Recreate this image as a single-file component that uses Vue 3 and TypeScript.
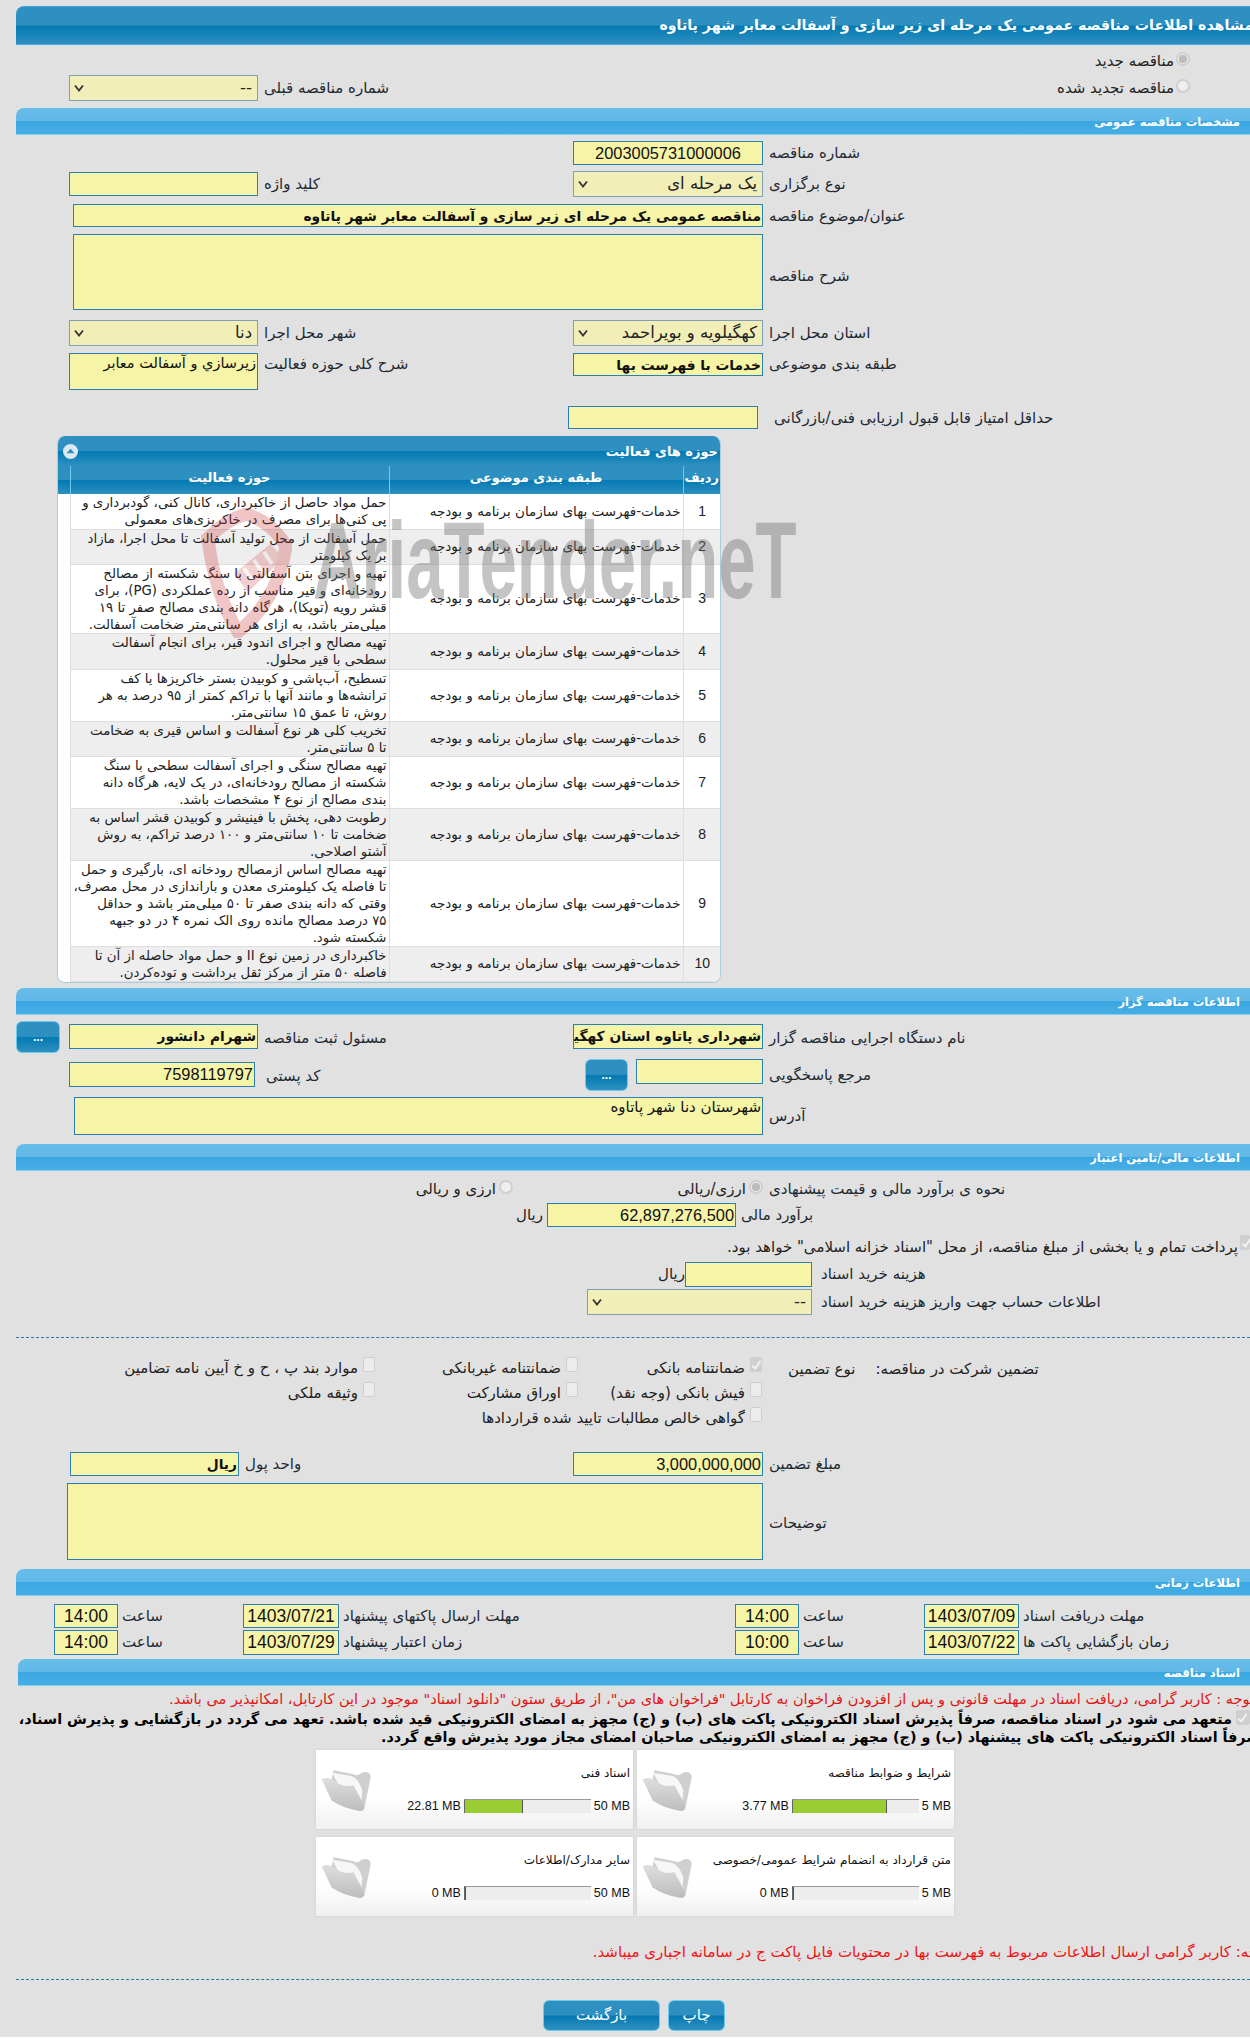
<script setup lang="ts">
const subject = 'خدمات-فهرست بهای سازمان برنامه و بودجه'
const activities: string[] = [
  'حمل مواد حاصل از خاکبرداری، کانال کنی، گودبرداری و\nپی کنی‌ها برای مصرف در خاکریزی‌های معمولی',
  'حمل آسفالت از محل تولید آسفالت تا محل اجرا، مازاد\nبر یک کیلومتر',
  'تهیه و اجرای بتن آسفالتی با سنگ شکسته از مصالح\nرودخانه‌ای و قیر مناسب از رده عملکردی (PG)، برای\nقشر رویه (توپکا)، هرگاه دانه بندی مصالح صفر تا ۱۹\nمیلی‌متر باشد، به ازای هر سانتی‌متر ضخامت آسفالت.',
  'تهیه مصالح و اجرای اندود قیر، برای انجام آسفالت\nسطحی با قیر محلول.',
  'تسطیح، آب‌پاشی و کوبیدن بستر خاکریزها یا کف\nترانشه‌ها و مانند آنها با تراکم کمتر از ۹۵ درصد به هر\nروش، تا عمق ۱۵ سانتی‌متر.',
  'تخریب کلی هر نوع آسفالت و اساس قیری به ضخامت\nتا ۵ سانتی‌متر.',
  'تهیه مصالح سنگی و اجرای آسفالت سطحی با سنگ\nشکسته از مصالح رودخانه‌ای، در یک لایه، هرگاه دانه\nبندی مصالح از نوع ۴ مشخصات باشد.',
  'رطوبت دهی، پخش با فینیشر و کوبیدن قشر اساس به\nضخامت تا ۱۰ سانتی‌متر و ۱۰۰ درصد تراکم، به روش\nآشتو اصلاحی.',
  'تهیه مصالح اساس ازمصالح رودخانه ای، بارگیری و حمل\nتا فاصله یک کیلومتری معدن و باراندازی در محل مصرف،\nوقتی که دانه بندی صفر تا ۵۰ میلی‌متر باشد و حداقل\n۷۵ درصد مصالح مانده روی الک نمره ۴ در دو جبهه\nشکسته شود.',
  'خاکبرداری در زمین نوع II و حمل مواد حاصله از آن تا\nفاصله ۵۰ متر از مرکز ثقل برداشت و توده‌کردن.',
]
const rowHeights = [35, 35, 69, 36, 51, 35, 52, 52, 86, 35]
const files = [
  { title: 'شرایط و ضوابط مناقصه', used: '3.77 MB', limit: '5 MB', pct: 75 },
  { title: 'اسناد فنی', used: '22.81 MB', limit: '50 MB', pct: 46 },
  { title: 'متن قرارداد به انضمام شرایط عمومی/خصوصی', used: '0 MB', limit: '5 MB', pct: 0 },
  { title: 'سایر مدارک/اطلاعات', used: '0 MB', limit: '50 MB', pct: 0 },
]
</script>

<template>
  <div class="page" dir="rtl">
    <div class="bar title"><span>مشاهده اطلاعات مناقصه عمومی یک مرحله ای زیر سازی و آسفالت معابر شهر پاتاوه</span></div>

    <div class="head-opts">
      <div class="opt-a"><i class="radio on"></i><span>مناقصه جدید</span></div>
      <div class="row opt-b">
        <div class="opt-c"><i class="radio"></i><span>مناقصه تجدید شده</span></div>
        <div class="lb prev-lb">شماره مناقصه قبلی</div>
        <div class="sel w189">--<svg class="chev" viewBox="0 0 10 8"><path d="M1 1.5 L5 6.5 L9 1.5" /></svg></div>
      </div>
    </div>

    <div class="bar sec">مشخصات مناقصه عمومی</div>

    <div class="row mt6">
      <div class="lb">شماره مناقصه</div>
      <div class="in num ctr h24">2003005731000006</div>
    </div>
    <div class="row mt6">
      <div class="lb">نوع برگزاری</div>
      <div class="sel w190">یک مرحله ای<svg class="chev" viewBox="0 0 10 8"><path d="M1 1.5 L5 6.5 L9 1.5" /></svg></div>
      <div class="lb">کلید واژه</div>
      <div class="in h24 w189 mt1"></div>
    </div>
    <div class="row mt7">
      <div class="lb">عنوان/موضوع مناقصه</div>
      <div class="in bold h23 wide690">مناقصه عمومی یک مرحله ای زیر سازی و آسفالت معابر شهر پاتاوه</div>
    </div>
    <div class="row mt7">
      <div class="lb low8">شرح مناقصه</div>
      <div class="in h76 wide690"></div>
    </div>
    <div class="row mt10">
      <div class="lb">استان محل اجرا</div>
      <div class="sel w190">کهگیلویه و بویراحمد<svg class="chev" viewBox="0 0 10 8"><path d="M1 1.5 L5 6.5 L9 1.5" /></svg></div>
      <div class="lb">شهر محل اجرا</div>
      <div class="sel w189">دنا<svg class="chev" viewBox="0 0 10 8"><path d="M1 1.5 L5 6.5 L9 1.5" /></svg></div>
    </div>
    <div class="row mt7">
      <div class="lb lb-t">طبقه بندی موضوعی</div>
      <div class="in bold h23">خدمات با فهرست بها</div>
      <div class="lb lb-t">شرح کلی حوزه فعالیت</div>
      <div class="in small h37 w189">زیرسازي و آسفالت معابر</div>
    </div>
    <div class="row mt16">
      <div class="lb score-lb">حداقل امتیاز قابل قبول ارزیابی فنی/بازرگانی</div>
      <div class="in h23 score"></div>
    </div>

    <div class="panel">
      <div class="panel-head">
        <span>حوزه های فعالیت</span>
        <i class="collapse"><svg viewBox="0 0 10 6"><path d="M5 0.5 L9.5 5.5 L0.5 5.5 Z" /></svg></i>
      </div>
      <table class="tbl">
        <thead>
          <tr>
            <th class="c-n">ردیف</th>
            <th class="c-s">طبقه بندی موضوعی</th>
            <th class="c-a">حوزه فعالیت</th>
            <th class="c-e"></th>
          </tr>
        </thead>
        <tbody>
          <tr v-for="(a, i) in activities" :key="i" :style="{ height: rowHeights[i] + 'px' }">
            <td class="c-n num-cell">{{ i + 1 }}</td>
            <td class="c-s">{{ subject }}</td>
            <td class="c-a">{{ a }}</td>
            <td class="c-e"></td>
          </tr>
        </tbody>
      </table>
    </div>

    <div class="bar sec mt5">اطلاعات مناقصه گزار</div>

    <div class="row5 mt9">
      <div class="lb">نام دستگاه اجرایی مناقصه گزار</div>
      <div class="in bold h25">شهرداری پاتاوه استان کهگیلویه و بویراحمد</div>
      <div class="lb">مسئول ثبت مناقصه</div>
      <div class="in bold h25 w189">شهرام دانشور</div>
      <button class="dots side">...</button>
    </div>
    <div class="row5 mt6">
      <div class="lb">مرجع پاسخگویی</div>
      <div class="ref-wrap">
        <div class="in h25 w127"></div>
        <button class="dots">...</button>
      </div>
      <div class="lb mt3 postal-lb">کد پستی</div>
      <div class="in num h25 w186 mt3 lead">7598119797</div>
    </div>
    <div class="row mt6">
      <div class="lb">آدرس</div>
      <div class="in small addr h38 w689">شهرستان دنا شهر پاتاوه</div>
    </div>

    <div class="bar sec mt9">اطلاعات مالی/تامین اعتبار</div>

    <div class="row mt7">
      <div class="lb">نحوه ی برآورد مالی و قیمت پیشنهادی</div>
      <div class="opts">
        <div class="opt w250"><i class="radio on"></i><span>ارزی/ریالی</span></div>
        <div class="opt"><i class="radio"></i><span>ارزی و ریالی</span></div>
      </div>
    </div>
    <div class="flexrow mt3">
      <div class="lb w514">برآورد مالی</div>
      <div class="in num h24 w189">62,897,276,500</div>
      <span class="unit">ریال</span>
    </div>
    <div class="flexrow chk-row">
      <i class="check on"></i>
      <span>پرداخت تمام و یا بخشی از مبلغ مناقصه، از محل "اسناد خزانه اسلامی" خواهد بود.</span>
    </div>
    <div class="flexrow mt3">
      <div class="lb w438">هزینه خرید اسناد</div>
      <div class="in h25 w127"></div>
      <span class="unit tight">ریال</span>
    </div>
    <div class="flexrow mt2">
      <div class="lb w438">اطلاعات حساب جهت واریز هزینه خرید اسناد</div>
      <div class="sel w225">--<svg class="chev" viewBox="0 0 10 8"><path d="M1 1.5 L5 6.5 L9 1.5" /></svg></div>
    </div>

    <hr class="dash gap22" />

    <div class="guar">
      <div class="guar-row">
        <div class="guar-head"><span>تضمین شرکت در مناقصه:</span><span>نوع تضمین</span></div>
        <div class="g g1"><i class="check on"></i><span>ضمانتنامه بانکی</span></div>
        <div class="g g2"><i class="check"></i><span>ضمانتنامه غیربانکی</span></div>
        <div class="g"><i class="check"></i><span>موارد بند پ ، ح و خ آیین نامه تضامین</span></div>
      </div>
      <div class="guar-row">
        <div class="guar-head"></div>
        <div class="g g1"><i class="check"></i><span>فیش بانکی (وجه نقد)</span></div>
        <div class="g g2"><i class="check"></i><span>اوراق مشارکت</span></div>
        <div class="g"><i class="check"></i><span>وثیقه ملکی</span></div>
      </div>
      <div class="guar-row">
        <div class="guar-head"></div>
        <div class="g"><i class="check"></i><span>گواهی خالص مطالبات تایید شده قراردادها</span></div>
      </div>
    </div>

    <div class="row row-unit mt20">
      <div class="lb">مبلغ تضمین</div>
      <div class="in num h24">3,000,000,000</div>
      <div class="lb">واحد پول</div>
      <div class="in bold h24 w169">ریال</div>
    </div>
    <div class="row mt7">
      <div class="lb low3">توضیحات</div>
      <div class="in h77 w696"></div>
    </div>

    <div class="bar sec mt9">اطلاعات زمانی</div>

    <div class="times mt8">
      <div class="lb">مهلت دریافت اسناد</div><div class="in num ctr h24">1403/07/09</div>
      <div class="lb">ساعت</div><div class="in num ctr h24">14:00</div>
      <div class="lb">مهلت ارسال پاکتهای پیشنهاد</div><div class="in num ctr h24">1403/07/21</div>
      <div class="lb">ساعت</div><div class="in num ctr h24">14:00</div>
    </div>
    <div class="times mt2">
      <div class="lb">زمان بازگشایی پاکت ها</div><div class="in num ctr h25">1403/07/22</div>
      <div class="lb">ساعت</div><div class="in num ctr h25">10:00</div>
      <div class="lb">زمان اعتبار پیشنهاد</div><div class="in num ctr h25">1403/07/29</div>
      <div class="lb">ساعت</div><div class="in num ctr h25">14:00</div>
    </div>

    <div class="bar sec sec-docs mt4">اسناد مناقصه</div>

    <div class="notice">توجه : کاربر گرامی، دریافت اسناد در مهلت قانونی و پس از افزودن فراخوان به کارتابل "فراخوان های من"، از طریق ستون "دانلود اسناد" موجود در این کارتابل، امکانپذیر می باشد.</div>
    <div class="pledge first">
      <i class="check on"></i>
      <span>متعهد می شود در اسناد مناقصه، صرفاً پذیرش اسناد الکترونیکی پاکت های (ب) و (ج) مجهز به امضای الکترونیکی قید شده باشد. تعهد می گردد در بازگشایی و پذیرش اسناد،</span>
    </div>
    <div class="pledge second">صرفاً اسناد الکترونیکی پاکت های پیشنهاد (ب) و (ج) مجهز به امضای الکترونیکی صاحبان امضای مجاز مورد پذیرش واقع گردد.</div>

    <div class="boxes">
      <div v-for="f in files" :key="f.title" class="box">
        <div class="box-main">
          <div class="box-title">{{ f.title }}</div>
          <div class="meter-row">
            <span class="mb">{{ f.limit }}</span>
            <div class="meter"><div class="fill" :style="{ width: f.pct + '%' }"></div></div>
            <span class="mb">{{ f.used }}</span>
          </div>
        </div>
        <svg class="folder" viewBox="30 60 165 150">
          <defs>
            <linearGradient id="fg" x1="0" y1="0" x2="0" y2="1">
              <stop offset="0" stop-color="#dedede" />
              <stop offset="1" stop-color="#bdbdbd" />
            </linearGradient>
          </defs>
          <path d="M72 72 L132 84 Q148 92 160 80 Q184 72 188 92 L168 192 Q160 200 150 196 L60 130 Z" fill="#cfcfcf" />
          <path d="M68 80 L128 90 Q150 98 162 136 L158 176 L90 122 Z" fill="#f7f7f7" />
          <path d="M35 100 Q58 90 76 106 Q108 128 134 118 L166 178 Q172 202 150 198 Q102 190 66 166 Q54 140 35 100 Z" fill="url(#fg)" />
        </svg>
      </div>
    </div>

    <div class="notice2">توجه: کاربر گرامی ارسال اطلاعات مربوط به فهرست بها در محتویات فایل پاکت ج در سامانه اجباری میباشد.</div>

    <hr class="dash gap17" />

    <div class="actions">
      <button class="act a-print">چاپ</button>
      <button class="act a-back">بازگشت</button>
    </div>

    <div class="wm" aria-hidden="true">
      <svg class="wm-logo" viewBox="0 0 92 130">
        <path d="M46 6 Q72 14 86 38 Q78 92 38 124 Q14 84 8 30 Q26 12 46 6 Z" fill="none" stroke="#c83232" stroke-width="13" />
        <path d="M34 66 L70 36 L84 50 L48 84 Z" fill="#c83232" opacity=".8" />
        <path d="M44 60 L52 72 M54 52 L62 64 M64 44 L72 56" stroke="#f2dede" stroke-width="4" />
      </svg>
      <span class="wm-text">AriaTender.neT</span>
    </div>
  </div>
</template>

<style>
html, body { margin: 0; background: #fff; }
</style>

<style scoped>
.page {
  position: relative;
  width: 1250px;
  height: 2037px;
  box-sizing: border-box;
  padding-top: 6px;
  overflow: hidden;
  background: #e1e1e1;
  font-family: "DejaVu Sans", "Liberation Sans", sans-serif;
  font-size: 15px;
  color: #222;
}
.bar { margin-left: 16px; box-sizing: border-box; white-space: nowrap; border-top-left-radius: 8px; color: #fff; font-weight: bold; }
.title {
  height: 39px;
  line-height: 37px;
  font-size: 14.2px;
  background: linear-gradient(#2e90c0 0, #2e90c0 48%, #0479b2 52%, #2e90c0 100%);
  border-top: 1px solid #3c9fd8;
  border-bottom: 1px solid #44aee6;
}
.title span { display: inline-block; margin-right: -3px; }
.sec {
  height: 27px;
  line-height: 28px;
  padding-right: 10px;
  font-size: 11.5px;
  background: linear-gradient(#66bdea 0, #62b9e8 48%, #3aa7e2 52%, #48aee4 100%);
  border-bottom: 1px solid #80d0f2;
}
.sec-docs { margin-left: 18px; }

.head-opts { height: 63px; box-sizing: border-box; padding-top: 5px; }
.opt-a { display: flex; align-items: center; height: 22px; padding-right: 60px; gap: 2px; }
.opt-b { margin-top: 3px; }
.opt-c { display: flex; align-items: center; gap: 2px; height: 26px; padding-right: 60px; grid-column: 1 / 3; }
.prev-lb { grid-column: 3; }

.row, .row5 { display: grid; grid-template-columns: 487px 190px 315px 188px; align-items: start; }
.row5 { grid-template-columns: 487px 190px 315px 188px 70px; }
.row-unit { grid-template-columns: 487px 190px 334px 169px; }

.lb { align-self: center; text-align: left; padding-left: 6px; line-height: 22px; white-space: nowrap; color: #1e2a33; }
.lb-t { align-self: start; }
.low8 { padding-top: 8px; }
.low3 { padding-top: 3px; }
.postal-lb { padding-left: 8px; }
.score-lb { padding-left: 11px; grid-column: 1; }
.score { width: 190px; margin-right: 5px; }

.in {
  box-sizing: border-box;
  border: 1px solid #2a80b2;
  background: #f6f4a6;
  white-space: nowrap;
  overflow: hidden;
  color: #111;
  padding: 0 1px;
  line-height: 22px;
}
.num { font-family: "Liberation Sans", sans-serif; font-size: 16.4px; direction: ltr; text-align: right; }
.ctr { text-align: center; }
.bold { font-weight: bold; font-size: 13.8px; }
.small { font-size: 14.5px; line-height: 18px; }
.addr { font-size: 15px; }
.lead { line-height: 23px; margin-right: 3px; }
.h23 { height: 23px; } .h24 { height: 24px; } .h25 { height: 25px; }
.h37 { height: 37px; } .h38 { height: 38px; } .h76 { height: 76px; } .h77 { height: 77px; }
.w127 { width: 127px; } .w169 { width: 169px; } .w186 { width: 186px; }
.w189 { width: 189px; } .w190 { width: 190px; } .w225 { width: 225px; } .w250 { width: 250px; }
.w438 { width: 438px; box-sizing: border-box; padding-left: 9px; }
.w514 { width: 514px; box-sizing: border-box; padding-left: 5px; }
.w689 { width: 689px; grid-column: 2 / 5; }
.w696 { width: 696px; grid-column: 2 / 5; }
.wide690 { width: 690px; grid-column: 2 / 5; }

.sel {
  position: relative;
  box-sizing: border-box;
  height: 26px;
  line-height: 24px;
  padding-right: 5px;
  border: 1px solid #7f9fb5;
  background: #f1eeb8;
  white-space: nowrap;
  overflow: hidden;
  font-size: 16.5px;
}
.chev { position: absolute; left: 4px; top: 8px; width: 10px; height: 8px; }
.chev path { fill: none; stroke: #333; stroke-width: 1.8; }

.mt1 { margin-top: 1px; } .mt2 { margin-top: 2px; } .mt3 { margin-top: 3px; } .mt4 { margin-top: 4px; }
.mt5 { margin-top: 5px; } .mt6 { margin-top: 6px; } .mt7 { margin-top: 7px; } .mt8 { margin-top: 8px; } .mt9 { margin-top: 9px; }
.mt10 { margin-top: 10px; } .mt16 { margin-top: 16px; } .mt20 { margin-top: 20px; }

.radio {
  flex: none;
  display: block;
  width: 14px;
  height: 14px;
  box-sizing: border-box;
  border-radius: 50%;
  border: 2px solid #cfcfcf;
  background: #efefef;
  margin-top: -4px;
}
.radio.on { background: radial-gradient(circle, #bdbdbd 0, #bdbdbd 4px, #efefef 4.5px); }
.check {
  flex: none;
  display: block;
  position: relative;
  width: 12px;
  height: 15px;
  box-sizing: border-box;
  border-radius: 2px;
  border: 1px solid #cfcfcf;
  background: #ececec;
}
.check.on { background: #cfcfcf; }
.check.on::after {
  content: "";
  position: absolute;
  left: 3px;
  top: 1px;
  width: 3px;
  height: 8px;
  border: solid #f2f2f2;
  border-width: 0 2px 2px 0;
  transform: rotate(35deg);
}

.panel {
  margin: 7px 0 0 57px;
  margin-right: 529px;
  box-sizing: border-box;
  border: 1px solid #a9cde0;
  border-top: 0;
  border-radius: 8px;
  overflow: hidden;
  background: #fff;
}
.panel-head {
  display: flex;
  justify-content: space-between;
  align-items: center;
  height: 30px;
  padding: 0 2px 0 5px;
  color: #fff;
  font-weight: bold;
  font-size: 13px;
  background: linear-gradient(#2e90c0 0, #2e90c0 48%, #0479b2 52%, #2e90c0 100%);
}
.collapse { display: flex; align-items: center; justify-content: center; width: 15px; height: 15px; border-radius: 50%; background: #dbe9f2; }
.collapse svg { width: 9px; height: 6px; }
.collapse path { fill: #2e90c0; }
.tbl { width: 662px; border-collapse: collapse; table-layout: fixed; font-size: 13.5px; color: #222; }
.tbl th {
  height: 28px;
  padding: 0 0 6px;
  box-sizing: border-box;
  color: #fff;
  font-size: 13px;
  background: linear-gradient(#2e90c0 0, #2e90c0 48%, #0479b2 52%, #2e90c0 100%);
  border-left: 1px solid #6ccaf0;
}
.tbl th.c-e { border-left: 0; }
.tbl td { padding: 0 2px 0 3px; line-height: 17px; border-left: 1px solid #dedede; border-bottom: 1px solid #dedede; }
.tbl td.c-a { padding: 0 2px 0 0; font-size: 13.3px; white-space: pre; overflow: hidden; }
.tbl tbody tr:nth-child(even) td { background: #eeeeee; }
.tbl tbody tr td.c-e { background: #fff; border: 0; padding: 0; }
.c-n { width: 37px; text-align: center; }
.c-s { width: 294px; }
.c-a { width: 319px; }
.c-e { width: 12px; }
.num-cell { font-family: "Liberation Sans", sans-serif; font-size: 14px; }

.ref-wrap { display: flex; align-items: flex-start; gap: 8px; }
.dots {
  display: block;
  width: 43px;
  height: 32px;
  padding: 0;
  border: 1px solid #6ccaf0;
  border-radius: 6px;
  color: #fff;
  font: bold 12px "Liberation Sans", sans-serif;
  background: linear-gradient(#2e90c0 0, #2e90c0 48%, #0479b2 52%, #2e90c0 100%);
}
.side { width: 44px; margin: -3px 0 0 16px; justify-self: end; }

.opts { display: flex; grid-column: 2 / 5; }
.opt { display: flex; align-items: center; gap: 3px; height: 22px; }
.flexrow { display: flex; align-items: flex-start; }
.unit { line-height: 24px; margin-right: 4px; }
.unit.tight { margin-right: 0; }
.chk-row { margin-top: 8px; height: 24px; align-items: center; gap: 2px; }
.chk-row .check { width: 10px; margin-top: -8px; }

.dash { margin: 0 0 0 16px; border: 0; border-top: 1px dashed #2a7aa8; height: 0; }
.gap22 { margin-top: 22px; }
.gap17 { margin-top: 17px; }

.guar { margin-top: 19px; }
.guar-row { display: flex; height: 25px; }
.guar-head { width: 488px; box-sizing: border-box; display: flex; gap: 20px; justify-content: flex-end; padding-left: 26px; line-height: 24px; }
.g { display: flex; gap: 5px; line-height: 22px; white-space: nowrap; }
.g1 { width: 184px; }
.g2 { width: 203px; }

.times { display: grid; grid-template-columns: 231px 95px 125px 64px 396px 96px 125px 64px; align-items: start; }
.times .lb { padding-left: 4px; }
.times .num { font-size: 17.5px; }

.notice, .notice2, .pledge { white-space: nowrap; }
.notice { margin-top: 3px; line-height: 20px; font-size: 14.5px; color: #e01515; margin-right: -4px; }
.pledge { display: flex; align-items: center; gap: 4px; color: #000; font-weight: bold; font-size: 14.4px; line-height: 17px; height: 18px; }
.first { margin-top: 2px; }
.second { margin-right: -10px; font-size: 14.3px; }
.pledge .check { width: 14px; height: 15px; margin-top: -4px; }

.boxes { display: grid; grid-template-columns: 317px 317px; gap: 8px 4px; margin: 3px 296px 0 0; justify-content: start; }
.box {
  display: flex;
  height: 79px;
  box-sizing: border-box;
  background: linear-gradient(#fff 0, #fff 60%, #f0f0f0 100%);
  box-shadow: 0 0 2px #c8c8c8;
  padding: 0 3px 0 4px;
}
.box-main { flex: 1; min-width: 0; }
.box-title { margin-top: 14px; line-height: 18px; font-size: 12px; white-space: nowrap; color: #111; }
.meter-row { display: flex; align-items: center; gap: 3px; margin-top: 17px; font-family: "Liberation Sans", sans-serif; font-size: 12.5px; white-space: nowrap; color: #111; }
.mb { direction: ltr; unicode-bidi: isolate; }
.meter { width: 127px; height: 14px; box-sizing: border-box; background: #ededed; border-top: 1px solid #999; direction: ltr; border-left: 1px solid #666; }
.fill { height: 100%; background: #9acd32; border-right: 1px solid #555; box-sizing: border-box; }
.folder { flex: none; width: 53px; height: 49px; margin-top: 16px; }

.notice2 { margin-top: 26px; line-height: 20px; color: #f01515; margin-right: -20px; }

.actions { display: flex; gap: 8px; margin-top: 20px; padding-right: 525px; }
.act {
  height: 31px;
  padding: 0;
  border: 1px solid #6ccaf0;
  border-radius: 6px;
  color: #fff;
  font-family: "DejaVu Sans", sans-serif;
  font-size: 15px;
  background: linear-gradient(#2e90c0 0, #2e90c0 48%, #0479b2 52%, #2e90c0 100%);
}
.a-print { width: 57px; }
.a-back { width: 117px; }

.wm { position: absolute; left: 200px; top: 508px; width: 600px; height: 130px; pointer-events: none; direction: ltr; }
.wm-logo { position: absolute; left: 0; top: 0; width: 92px; height: 130px; opacity: .28; }
.wm-text {
  position: absolute;
  left: 113px;
  top: -12px;
  font: bold 110px "Liberation Sans", sans-serif;
  white-space: nowrap;
  color: #6e6e6e;
  opacity: .4;
  transform-origin: left top;
  transform: scaleX(.61);
}
</style>
